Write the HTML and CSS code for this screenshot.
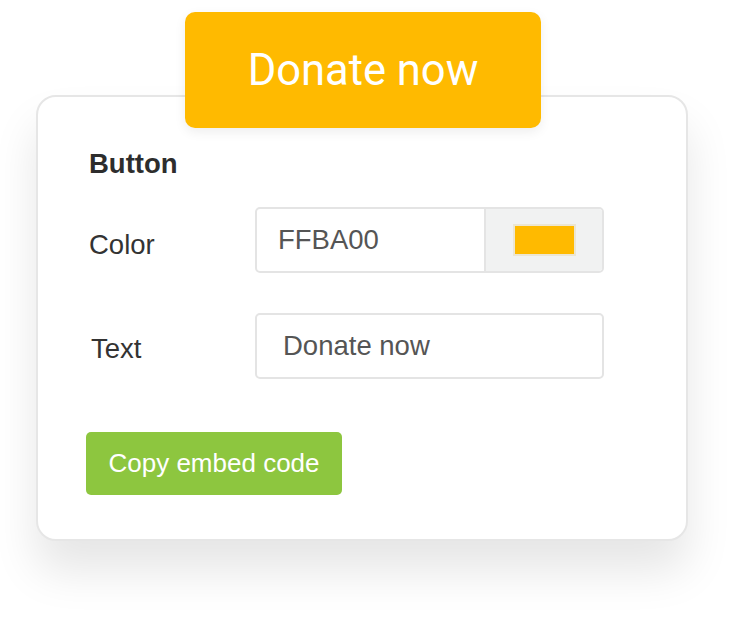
FILE: index.html
```html
<!DOCTYPE html>
<html lang="en">
<head>
  <meta charset="UTF-8" />
  <title>Donate Button Builder</title>
  <link rel="stylesheet" href="styles.css">
</head>
<body>
  <div class="stage">
    <button class="donate-btn">Donate now</button>

    <div class="card">
      <h2>Button</h2>

      <div class="field">
        <label>Color</label>
        <div class="input color-input">
          <span class="value">FFBA00</span>
          <span class="swatch-box"><span class="swatch"></span></span>
        </div>
      </div>

      <div class="field">
        <label class="text-label">Text</label>
        <div class="input text-input">Donate now</div>
      </div>

      <button class="copy-btn">Copy embed code</button>
    </div>
  </div>
</body>
</html>
```

FILE: styles.css
```css
body {
  margin: 0;
  padding: 0;
  min-height: 618px;
  background: #fff;
  font-family: 'Liberation Sans', Arial, sans-serif;
  color: #333;
}

.stage {
  width: 652px;
  margin-left: 36px;
  padding-top: 12px;
  padding-bottom: 77px;
  display: flex;
  flex-direction: column;
}

.donate-btn {
  position: relative;
  z-index: 1;
  align-self: flex-start;
  margin-left: 149px;
  width: 356px;
  height: 116px;
  border: none;
  border-radius: 10px;
  background-color: #ffba00;
  color: white;
  font-family: Roboto, sans-serif;
  font-size: 43.5px;
  font-weight: 400;
  box-shadow: 0 4px 12px rgba(0, 0, 0, 0.07);
  cursor: pointer;
}

.card {
  margin-top: -33px;
  height: 446px;
  box-sizing: border-box;
  border: 2px solid #e6e6e6;
  border-radius: 20px;
  background: white;
  padding: 52px 40px 0 51px;
  box-shadow: 0 30px 45px rgba(0, 0, 0, 0.1);
}

.card h2 {
  margin: 0 0 28px;
  font-size: 27.5px;
  line-height: 30px;
  font-weight: bold;
  color: #2d2d2d;
}

.field {
  display: flex;
  margin-bottom: 40px;
}

.field label {
  box-sizing: border-box;
  flex: 0 0 166px;
  margin-top: 23px;
  font-size: 27.5px;
  line-height: 30px;
  color: #333;
}

.text-label {
  padding-left: 2px;
  margin-top: 21px !important;
}

.input {
  box-sizing: border-box;
  flex: 0 0 349px;
  height: 66px;
  border: 2px solid #e4e4e4;
  border-radius: 5px;
  display: flex;
  align-items: center;
  font-size: 27.5px;
  color: #555;
  overflow: hidden;
}

.color-input .value {
  flex: 1;
  padding-left: 21px;
}

.swatch-box {
  flex: 0 0 118px;
  box-sizing: border-box;
  height: 100%;
  background: #f1f2f2;
  border-left: 2px solid #e4e4e4;
  display: flex;
  align-items: center;
  justify-content: center;
}

.swatch {
  width: 59px;
  height: 28px;
  background: #ffba00;
  border: 2px solid #ece6d2;
}

.text-input {
  padding-left: 26px;
}

.copy-btn {
  margin-top: 13px;
  margin-left: -3px;
  width: 256px;
  height: 63px;
  border: none;
  border-radius: 5px;
  background-color: #8dc63f;
  color: white;
  font-family: 'Liberation Sans', Arial, sans-serif;
  font-size: 26px;
  cursor: pointer;
}
```
